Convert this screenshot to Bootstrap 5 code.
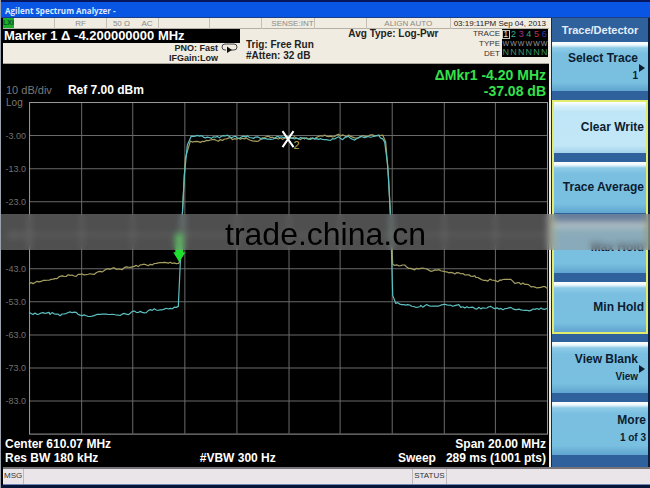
<!DOCTYPE html>
<html lang="en">
<head>
<meta charset="utf-8">
<meta name="viewport" content="width=device-width, initial-scale=1">
<title>Agilent Spectrum Analyzer</title>
<link href="https://cdn.jsdelivr.net/npm/bootstrap@5.3.0/dist/css/bootstrap.min.css" rel="stylesheet">
<style>
body { font-family: "Liberation Sans", Arial, sans-serif; background: #000; color: #fff; line-height: 1; }
.window { background: #000; border-left: 1px solid #9aa3ad; }
.titlebar { height: 18px; padding: 2px 4px 0; background: #0a56e4; border-top: 2px solid #06175e; border-bottom: 1px solid #1a3f86; }
.titlebar h1 { font-size: 8px; line-height: 13px; font-weight: bold; color: #dbe8ff; font-family: "Open Sans", sans-serif; }
.screen { margin-left: 2px; }
.cream { background: #f1ece1; color: #222; }
.indicators { display: grid; grid-template-columns: 52fr 52fr 52fr 51fr 52fr 52fr 52fr 84fr 98fr; height: 11px; border-bottom: 1px solid #b5b0a5; font-size: 8px; line-height: 11px; color: #8c8a84; }
.indicators > div { border-right: 1px solid #c4c0b6; text-align: center; white-space: nowrap; }
.indicators > div:last-child { border-right: 0; }
.lxi { background: #1dae2c; color: #052; width: 11px; height: 10px; font-weight: bold; font-size: 7px; line-height: 10px; }
.indicators .clock { color: #222; text-align: right; padding-right: 3px; }
.settings { height: 35px; border-bottom: 1px solid #aaa69c; }
.marker-box { width: 237px; height: 14px; background: #000; color: #fff; font-weight: bold; font-size: 13px; line-height: 14px; padding-left: 1px; }
.gain { font-size: 9px; line-height: 10px; font-weight: bold; gap: 3px; padding-right: 2px; text-align: right; }
.trig { font-size: 10px; line-height: 11px; font-weight: bold; padding: 10px 0 0 6px; }
.avg { font-size: 10px; line-height: 10px; font-weight: bold; }
.trace-legend { font-size: 8px; line-height: 10px; text-align: right; color: #333; padding-right: 2px; }
.trace-grid { width: 46px; height: 28px; font-size: 9px; line-height: 9px; padding-top: 1px; margin-right: 1px; background: #000; display: grid; grid-template-columns: repeat(6, 1fr); text-align: center; color: #3a9468; }
.trace-grid .sel { outline: 1px solid #c9c9b0; outline-offset: -1px; color: #ddd; }
.trace-grid .w { color: #999; font-size: 7px; }
.readout { height: 32px; padding: 3px 3px 0 3px; }
.scale { font-size: 11px; color: #7a7a7a; }
.reference { font-size: 12px; font-weight: bold; }
.delta { color: #35e04b; font-size: 14px; line-height: 16px; font-weight: bold; text-align: right; }
.plot text { font-family: "Liberation Sans", Arial, sans-serif; }
.annot { font-size: 12px; line-height: 14px; font-weight: bold; padding: 0 3px 2px 2px; }
.bandwidth { flex: 0 0 36%; }
.softkeys { flex: 0 0 101px; border-left: 2px solid #f2efe8; border-right: 2px solid #0b1d3d; background: #2f629c; padding-left: 1px; box-shadow: inset 1px 0 #1b2a44; }
.softkeys h2 { font-size: 11px; line-height: 24px; height: 24px; color: #e4eefa; font-weight: bold; }
.softkey { display: flex; flex-direction: column; justify-content: center; align-items: flex-end; width: 100%; height: 60px; padding: 4px 2px 4px 0; border: 0; border-bottom: 9px solid #2f629c; font-size: 12px; font-weight: bold; line-height: 17px; color: #0c1c30; background: linear-gradient(#fff 0, #eaf7fb 3px, #8ccbe6 6px, #7abfe0 12px, #79bfe0 82%, #5fa5cf 100%); position: relative; white-space: nowrap; }
.softkey small { font-size: 10px; line-height: 17px; font-weight: bold; }
.softkey.first { height: 58px; }
.softkey.last { height: 50px; border-bottom: 0; }
.softkey.more { height: 64px; border-bottom-width: 11px; }
.softkey.active { background: linear-gradient(#fff 0, #d9f1fb 4px, #bfe6f7 10px, #c2e7f7 85%, #a4d2ea 100%); }
.softkey.sub { padding-right: 10px; }
.softkey.sub::after { content: ""; position: absolute; right: 3px; top: 50%; margin-top: -3px; border: 4px solid transparent; border-left: 6px solid #0c1c30; border-right: 0; }
.trace-mode { border: 2px solid #e2ec6c; margin-bottom: 8px; }
.statusbar { height: 18px; border-top: 2px solid #77757a; border-bottom: 1px solid #7187b5; background: #e9e5e8; color: #333; font-size: 8px; line-height: 14px; margin-left: 2px; }
.statusbar > div { padding: 0 1px; border-right: 1px solid #bdb9bd; }
.statusbar > .message-area { flex: 391 1 0; }
.statusbar > .status-area { flex: 204 1 0; border-right: 0; }
.bottom-edge { height: 4px; background: #071638; }
.watermark { top: 214px; height: 36px; background: rgba(152,152,152,.52); backdrop-filter: blur(3px); color: #000; font-size: 32px; line-height: 40px; }
</style>
<script src="https://cdn.jsdelivr.net/npm/bootstrap@5.3.0/dist/js/bootstrap.bundle.min.js"></script>
</head>
<body>
<div class="window position-relative">
  <header class="titlebar"><h1 class="m-0">Agilent Spectrum Analyzer -</h1></header>
  <div class="d-flex">
    <main class="screen flex-fill d-flex flex-column">
      <div class="indicators cream">
        <div><div class="lxi">LXI</div></div>
        <div>RF</div>
        <div class="d-flex justify-content-around"><span>50 Ω</span><span>AC</span></div>
        <div></div><div></div>
        <div class="text-end">SENSE:INT</div>
        <div></div>
        <div>ALIGN AUTO</div>
        <div class="clock">03:19:11PM Sep 04, 2013</div>
      </div>
      <div class="settings cream d-flex">
        <div>
          <div class="marker-box">Marker 1 Δ -4.200000000 MHz</div>
          <div class="gain d-flex justify-content-end">
            <div>PNO: Fast<br>IFGain:Low</div>
            <svg width="17" height="11" viewBox="0 0 17 11" fill="none" stroke="#444" aria-hidden="true"><path d="M5 7H4Q1 7 1 4T4 1H13Q16 1 16 4T13 7H10"/><path d="M6 3.5L11 7L6 10Z" fill="#111" stroke="none"/></svg>
          </div>
        </div>
        <div class="trig">Trig: Free Run<br>#Atten: 32 dB</div>
        <div class="avg flex-fill text-center">Avg Type: Log-Pwr</div>
        <div class="trace-legend">TRACE<br>TYPE<br>DET</div>
        <div class="trace-grid">
          <span class="sel">1</span><span style="color:#3fae9a">2</span><span style="color:#a3328f">3</span><span style="color:#3da583">4</span><span style="color:#c22f43">5</span><span style="color:#3a3aa8">6</span>
          <span class="w">W</span><span class="w">W</span><span class="w">W</span><span class="w">W</span><span class="w">W</span><span class="w">W</span>
          <span>N</span><span>N</span><span>N</span><span>N</span><span>N</span><span>N</span>
        </div>
      </div>
      <div class="readout d-flex justify-content-between">
        <div class="d-flex align-items-end gap-3"><span class="scale">10 dB/div</span><span class="reference">Ref 7.00 dBm</span></div>
        <div class="delta">ΔMkr1 -4.20 MHz<br>-37.08 dB</div>
      </div>
      <svg class="plot d-block w-100 h-auto" viewBox="3 96 545 340" role="img" aria-label="Spectrum trace">
        <g id="grid" stroke="#6a6a6a"></g>
        <rect x="29.5" y="102.5" width="517" height="331" fill="none" stroke="#9a9a9a"/>
        <text x="6" y="106" font-size="10" fill="#7a7a7a">Log</text>
        <g id="scale" font-size="9" fill="#707070" text-anchor="end"></g>
        <g id="traces" fill="none" stroke-linejoin="round"></g>
        <path d="M175 233H183V252H185L179 262L173 252H175Z" fill="#1fe02e"/>
        <path d="M282 131L293 147M293 131L282 147" stroke="#fff" stroke-width="2"/>
        <text x="293" y="149" font-size="11" fill="#b9a94e">2</text>
      </svg>
      <div class="annot">
        <div class="d-flex justify-content-between"><span>Center 610.07 MHz</span><span>Span 20.00 MHz</span></div>
        <div class="d-flex"><span class="bandwidth">Res BW 180 kHz</span><span>#VBW 300 Hz</span><span class="ms-auto">Sweep &nbsp; 289 ms (1001 pts)</span></div>
      </div>
    </main>
    <nav class="softkeys" aria-label="Trace/Detector">
      <h2 class="m-0 text-center">Trace/Detector</h2>
      <button type="button" class="softkey first sub">Select Trace<small>1</small></button>
      <div class="trace-mode">
        <button type="button" class="softkey active">Clear Write</button>
        <button type="button" class="softkey">Trace Average</button>
        <button type="button" class="softkey">Max Hold</button>
        <button type="button" class="softkey last">Min Hold</button>
      </div>
      <button type="button" class="softkey sub">View Blank<small>View</small></button>
      <button type="button" class="softkey more">More<small>1 of 3</small></button>
    </nav>
  </div>
  <footer class="statusbar d-flex"><div>MSG</div><div class="message-area"></div><div>STATUS</div><div class="status-area"></div></footer>
  <div class="bottom-edge"></div>
  <div class="watermark position-absolute start-0 end-0 text-center pe-none">trade.china.cn</div>
</div>
<script>
const NS = "http://www.w3.org/2000/svg";
function add(parent, tag, attrs, text) {
  const el = document.createElementNS(NS, tag);
  for (const k in attrs) el.setAttribute(k, attrs[k]);
  if (text) el.textContent = text;
  document.getElementById(parent).appendChild(el);
}
for (let i = 1; i < 10; i++) {
  const x = Math.round(29 + i * 51.7) + 0.5, y = Math.round(102 + i * 33.1) + 0.5;
  add("grid", "path", { d: `M${x} 102V433M29 ${y}H546` });
  add("scale", "text", { x: 26, y: y + 3 }, i === 1 ? "-3.00" : "-" + (i * 10 - 7) + ".0");
}
// Deterministic noise, so the traces look the same on each load.
let seed = 7;
const rnd = () => (seed = (seed * 16807) % 2147483647) / 2147483647 - 0.5;
function trace(points, color, amp) {
  let d = "M" + points[0], n = 0;
  for (let i = 1; i < points.length; i++) {
    const [x0, y0] = points[i - 1], [x1, y1] = points[i];
    const steep = Math.abs(y1 - y0) > x1 - x0;
    if (!steep) for (let x = x0 + 2; x < x1; x += 2) {
      n = n * 0.6 + rnd() * amp;
      d += `L${x} ${(y0 + (y1 - y0) * (x - x0) / (x1 - x0) + n).toFixed(1)}`;
    }
    d += `L${x1} ${y1}`;
  }
  add("traces", "path", { d, stroke: color, "stroke-width": 1.2 });
}
trace([[29,284],[45,280],[60,276],[80,274],[100,271],[110,269],[130,267],[150,264],[179,262],[181,235],[183,195],[185,158],[190,141],[240,139],[310,138],[330,136],[382,135],[385,142],[388,180],[391,240],[392,264],[420,268],[450,272],[475,277],[500,280],[520,284],[546,288]], "#a59f62", 2.8);
trace([[29,312],[50,314],[100,314],[140,311],[178,306],[180,262],[182,215],[184,175],[187,145],[191,136],[215,137],[290,138],[380,138],[384,142],[387,165],[390,220],[391,260],[392,295],[395,303],[420,305],[460,307],[500,308],[546,308]], "#5cbfc0", 2.8);
</script>
</body>
</html>
